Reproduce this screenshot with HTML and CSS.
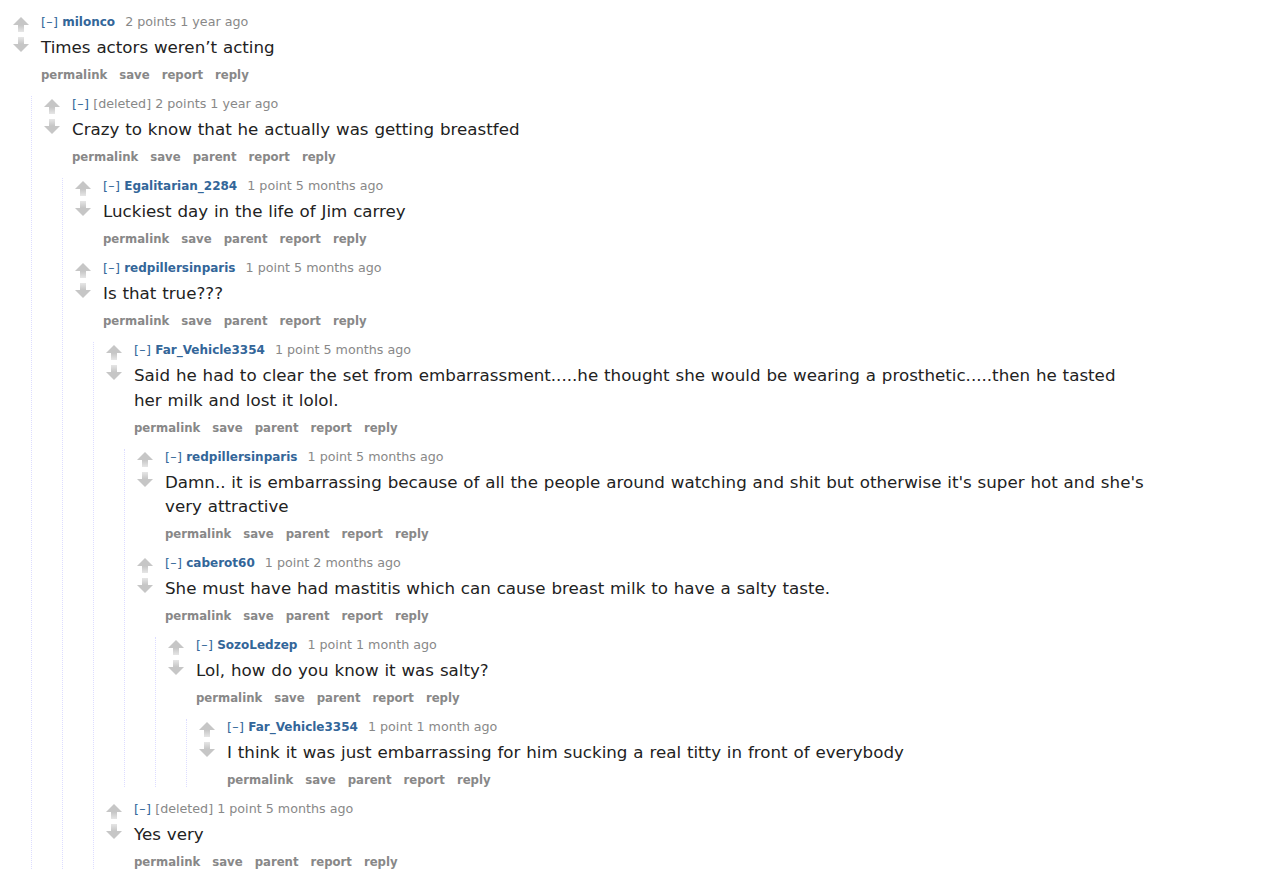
FILE: index.html
```html
<!DOCTYPE html>
<html lang="en">
<head>
<meta charset="utf-8">
<title>comments</title>
<link rel="stylesheet" href="styles.css">
</head>
<body>
<svg class="defs" width="0" height="0" aria-hidden="true">
  <defs>
    <linearGradient id="gUp" x1="0" y1="0" x2="0" y2="1">
      <stop offset="0" stop-color="#c6c6c6"/>
      <stop offset="1" stop-color="#e6e6e6"/>
    </linearGradient>
    <linearGradient id="gDown" x1="0" y1="1" x2="0" y2="0">
      <stop offset="0" stop-color="#c6c6c6"/>
      <stop offset="1" stop-color="#e6e6e6"/>
    </linearGradient>
    <symbol id="up" viewBox="0 0 16 15">
      <path d="M8 0 L16 8 L0 8 Z" fill="#c6c6c6"/>
      <rect x="5" y="8" width="6" height="7" fill="url(#gUp)"/>
    </symbol>
    <symbol id="down" viewBox="0 0 16 15">
      <rect x="5" y="0" width="6" height="7" fill="url(#gDown)"/>
      <path d="M0 7 L16 7 L8 15 Z" fill="#c6c6c6"/>
    </symbol>
  </defs>
</svg>

<div class="thread">
  <div class="comment">
    <div class="midcol"><svg class="arrow up"><use href="#up"/></svg><svg class="arrow down"><use href="#down"/></svg></div>
    <div class="entry">
      <p class="tagline"><span class="expand">[–]</span> <span class="author">milonco</span> <span class="score">2 points</span> <span class="time">1 year ago</span></p>
      <div class="md">Times actors weren’t acting</div>
      <ul class="buttons"><li>permalink</li><li>save</li><li>report</li><li>reply</li></ul>

      <div class="child">
        <div class="comment">
          <div class="midcol"><svg class="arrow up"><use href="#up"/></svg><svg class="arrow down"><use href="#down"/></svg></div>
          <div class="entry">
            <p class="tagline"><span class="expand">[–]</span> <span class="deleted">[deleted]</span> <span class="score">2 points</span> <span class="time">1 year ago</span></p>
            <div class="md">Crazy to know that he actually was getting breastfed</div>
            <ul class="buttons"><li>permalink</li><li>save</li><li>parent</li><li>report</li><li>reply</li></ul>

            <div class="child">
              <div class="comment">
                <div class="midcol"><svg class="arrow up"><use href="#up"/></svg><svg class="arrow down"><use href="#down"/></svg></div>
                <div class="entry">
                  <p class="tagline"><span class="expand">[–]</span> <span class="author">Egalitarian_2284</span> <span class="score">1 point</span> <span class="time">5 months ago</span></p>
                  <div class="md">Luckiest day in the life of Jim carrey</div>
                  <ul class="buttons"><li>permalink</li><li>save</li><li>parent</li><li>report</li><li>reply</li></ul>
                </div>
              </div>

              <div class="comment">
                <div class="midcol"><svg class="arrow up"><use href="#up"/></svg><svg class="arrow down"><use href="#down"/></svg></div>
                <div class="entry">
                  <p class="tagline"><span class="expand">[–]</span> <span class="author">redpillersinparis</span> <span class="score">1 point</span> <span class="time">5 months ago</span></p>
                  <div class="md">Is that true???</div>
                  <ul class="buttons"><li>permalink</li><li>save</li><li>parent</li><li>report</li><li>reply</li></ul>

                  <div class="child">
                    <div class="comment">
                      <div class="midcol"><svg class="arrow up"><use href="#up"/></svg><svg class="arrow down"><use href="#down"/></svg></div>
                      <div class="entry">
                        <p class="tagline"><span class="expand">[–]</span> <span class="author">Far_Vehicle3354</span> <span class="score">1 point</span> <span class="time">5 months ago</span></p>
                        <div class="md">Said he had to clear the set from embarrassment.....he thought she would be wearing a prosthetic.....then he tasted her milk and lost it lolol.</div>
                        <ul class="buttons"><li>permalink</li><li>save</li><li>parent</li><li>report</li><li>reply</li></ul>

                        <div class="child">
                          <div class="comment">
                            <div class="midcol"><svg class="arrow up"><use href="#up"/></svg><svg class="arrow down"><use href="#down"/></svg></div>
                            <div class="entry">
                              <p class="tagline"><span class="expand">[–]</span> <span class="author">redpillersinparis</span> <span class="score">1 point</span> <span class="time">5 months ago</span></p>
                              <div class="md">Damn.. it is embarrassing because of all the people around watching and shit but otherwise it's super hot and she's very attractive</div>
                              <ul class="buttons"><li>permalink</li><li>save</li><li>parent</li><li>report</li><li>reply</li></ul>
                            </div>
                          </div>

                          <div class="comment">
                            <div class="midcol"><svg class="arrow up"><use href="#up"/></svg><svg class="arrow down"><use href="#down"/></svg></div>
                            <div class="entry">
                              <p class="tagline"><span class="expand">[–]</span> <span class="author">caberot60</span> <span class="score">1 point</span> <span class="time">2 months ago</span></p>
                              <div class="md">She must have had mastitis which can cause breast milk to have a salty taste.</div>
                              <ul class="buttons"><li>permalink</li><li>save</li><li>parent</li><li>report</li><li>reply</li></ul>

                              <div class="child">
                                <div class="comment">
                                  <div class="midcol"><svg class="arrow up"><use href="#up"/></svg><svg class="arrow down"><use href="#down"/></svg></div>
                                  <div class="entry">
                                    <p class="tagline"><span class="expand">[–]</span> <span class="author">SozoLedzep</span> <span class="score">1 point</span> <span class="time">1 month ago</span></p>
                                    <div class="md">Lol, how do you know it was salty?</div>
                                    <ul class="buttons"><li>permalink</li><li>save</li><li>parent</li><li>report</li><li>reply</li></ul>

                                    <div class="child">
                                      <div class="comment">
                                        <div class="midcol"><svg class="arrow up"><use href="#up"/></svg><svg class="arrow down"><use href="#down"/></svg></div>
                                        <div class="entry">
                                          <p class="tagline"><span class="expand">[–]</span> <span class="author">Far_Vehicle3354</span> <span class="score">1 point</span> <span class="time">1 month ago</span></p>
                                          <div class="md">I think it was just embarrassing for him sucking a real titty in front of everybody</div>
                                          <ul class="buttons"><li>permalink</li><li>save</li><li>parent</li><li>report</li><li>reply</li></ul>
                                        </div>
                                      </div>
                                    </div>
                                  </div>
                                </div>
                              </div>
                            </div>
                          </div>
                        </div>
                      </div>
                    </div>

                    <div class="comment">
                      <div class="midcol"><svg class="arrow up"><use href="#up"/></svg><svg class="arrow down"><use href="#down"/></svg></div>
                      <div class="entry">
                        <p class="tagline"><span class="expand">[–]</span> <span class="deleted">[deleted]</span> <span class="score">1 point</span> <span class="time">5 months ago</span></p>
                        <div class="md">Yes very</div>
                        <ul class="buttons"><li>permalink</li><li>save</li><li>parent</li><li>report</li><li>reply</li></ul>
                      </div>
                    </div>
                  </div>
                </div>
              </div>
            </div>
          </div>
        </div>
      </div>
    </div>
  </div>
</div>
</body>
</html>
```

FILE: styles.css
```css
html, body {
  margin: 0;
  padding: 0;
  background: #fff;
}

body {
  font-family: "DejaVu Sans", Verdana, sans-serif;
  color: #222;
  overflow: hidden;
}

.defs {
  position: absolute;
  width: 0;
  height: 0;
  overflow: hidden;
}

.thread {
  padding: 14px 0 0 1px;
}

.comment {
  display: flex;
  padding: 1px 0 0 12px;
}

.comment + .comment {
  margin-top: 14px;
}

.midcol {
  flex: 0 0 17px;
  width: 17px;
  margin-right: 11px;
  display: flex;
  flex-direction: column;
}

.arrow {
  display: block;
  width: 16px;
  height: 15px;
}

.arrow.up {
  margin-top: 2px;
}

.arrow.down {
  margin-top: 5px;
}

.entry {
  flex: 1;
  min-width: 0;
}

.tagline {
  margin: 0;
  height: 14px;
  line-height: 14px;
  font-size: 12.7px;
  color: #888;
  white-space: nowrap;
}

.expand {
  color: #369;
  letter-spacing: 0.3px;
}

.author {
  color: #369;
  font-weight: bold;
  font-size: 12px;
  margin-right: 6px;
}

.deleted {
  color: #888;
}

.md {
  margin-top: 6px;
  font-size: 16.7px;
  line-height: 24.5px;
  word-spacing: 0.55px;
  max-width: 990px;
  color: #222;
}

.buttons {
  list-style: none;
  margin: 8.5px 0 0;
  padding: 0;
  display: flex;
  gap: 12px;
  height: 14px;
  line-height: 14px;
  font-size: 11.7px;
  font-weight: bold;
  color: #888;
}

.child {
  margin: 14px 0 0 -10px;
  border-left: 1px dotted #ddf;
}
```
